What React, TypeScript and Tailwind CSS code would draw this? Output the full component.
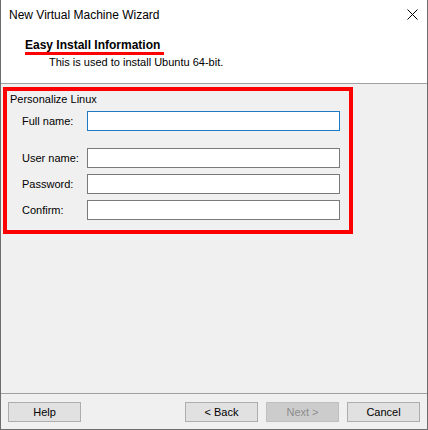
import React from 'react';

const Field: React.FC<{ label: string; focused?: boolean; className?: string }> = ({ label, focused, className }) => (
  <div className={`flex items-center ${className ?? ''}`}>
    <label className="w-[77px] pl-[12px] shrink-0 whitespace-nowrap">{label}</label>
    <input
      type="text"
      className={`w-[253px] h-[20px] shrink-0 bg-white outline-none border ${focused ? 'border-[#1f7ac4]' : 'border-[#7a7a7a]'}`}
    />
  </div>
);

const WizButton: React.FC<{ label: string; disabled?: boolean }> = ({ label, disabled }) => (
  <button
    disabled={disabled}
    className={`w-[73px] h-[20px] border text-[11px] leading-none ${
      disabled ? 'bg-[#cccccc] border-[#bfbfbf] text-[#8c8c8c]' : 'bg-[#e1e1e1] border-[#adadad] text-black'
    }`}
  >
    {label}
  </button>
);

export default function App() {
  return (
    <div className="w-[428px] h-[430px] bg-[#f0f0f0] flex flex-col border-x border-b border-[#6d6d6d] font-['Liberation_Sans',Arial,sans-serif] text-[11px] text-black">
      {/* title bar + header */}
      <div className="bg-white h-[84px] border-b border-[#a0a0a0] flex flex-col shrink-0">
        <div className="h-[30px] flex items-center justify-between pl-[8px] pr-[9px]">
          <span className="text-[12px] leading-none -mt-[1px]">New Virtual Machine Wizard</span>
          <svg width="11" height="11" viewBox="0 0 11 11" className="-mt-[1px]">
            <path d="M0.5 0.5 L10.5 10.5 M10.5 0.5 L0.5 10.5" stroke="#000" strokeWidth="1" />
          </svg>
        </div>
        <div className="pl-[24px] pt-[7px]">
          <div className="inline-block font-bold text-[12px] leading-[14px] border-b-[3px] border-[#ff0000] pr-[4px]">
            Easy Install Information
          </div>
          <div className="pl-[24px] leading-[13px] mt-[1px]">This is used to install Ubuntu 64-bit.</div>
        </div>
      </div>

      {/* body */}
      <div className="flex-1 pl-[2px] pt-[3px]">
        <div className="w-[350px] h-[147px] border-[4px] border-[#ff0000] pl-[3px] pt-[2px]">
          <div className="leading-[13px]">Personalize Linux</div>
          <Field label="Full name:" focused className="mt-[5px]" />
          <Field label="User name:" className="mt-[17px]" />
          <Field label="Password:" className="mt-[6px]" />
          <Field label="Confirm:" className="mt-[6px]" />
        </div>
      </div>

      {/* footer */}
      <div className="h-[36px] border-t border-[#a0a0a0] flex items-start justify-between pl-[7px] pr-[7px] pt-[8px] shrink-0">
        <WizButton label="Help" />
        <div className="flex gap-[8px]">
          <WizButton label="< Back" />
          <WizButton label="Next >" disabled />
          <WizButton label="Cancel" />
        </div>
      </div>
    </div>
  );
}
